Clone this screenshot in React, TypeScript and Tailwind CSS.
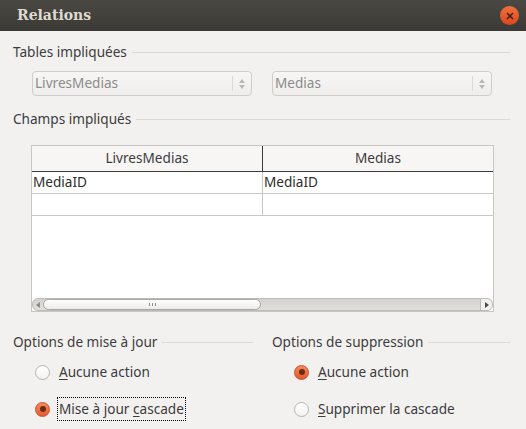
import React from "react";

function SectionTitle({ label }: { label: string }) {
  return (
    <div className="flex items-center h-[18px]">
      <span className="text-[13.6px] text-[#3c3c3c] whitespace-nowrap">{label}</span>
      <div className="flex-1 h-px bg-[#dcdad5] ml-[5px]" />
    </div>
  );
}

function Combo({ value }: { value: string }) {
  return (
    <div className="w-[220px] h-[25px] rounded-[4px] border border-[#d0cdc8] bg-gradient-to-b from-[#f7f6f5] to-[#efeeec] flex items-center">
      <span className="flex-1 pl-[2px] text-[13.6px] text-[#8b8b8b]">{value}</span>
      <div className="w-px h-[15px] bg-[#dcdad5]" />
      <div className="w-[18px] flex flex-col items-center justify-center gap-[2px]">
        <svg width="6" height="4" viewBox="0 0 6 4"><path d="M0 4 L3 0 L6 4 Z" fill="#b9b7b2" /></svg>
        <svg width="6" height="4" viewBox="0 0 6 4"><path d="M0 0 L3 4 L6 0 Z" fill="#b9b7b2" /></svg>
      </div>
    </div>
  );
}

function Radio({ checked, label, u, rest, focused }: { checked: boolean; label?: string; u: string; rest: string; focused?: boolean }) {
  return (
    <div className="flex items-center h-[22px]">
      {checked ? (
        <div className="w-[15px] h-[15px] rounded-full bg-gradient-to-b from-[#f28a5e] to-[#e5582a] border border-[#c9512a] flex items-center justify-center">
          <div className="w-[6px] h-[6px] rounded-full bg-[#6b2c17]" />
        </div>
      ) : (
        <div className="w-[15px] h-[15px] rounded-full bg-gradient-to-b from-white to-[#f4f3f2] border border-[#b5b3ae]" />
      )}
      <div className={"ml-[8px] px-[1px] h-[22px] leading-[22px] text-[13.6px] text-[#3c3c3c] whitespace-pre " + (focused ? "outline outline-1 outline-dotted outline-black" : "")}>
        <span>{label}</span>
        <span className="underline underline-offset-2">{u}</span>
        <span>{rest}</span>
      </div>
    </div>
  );
}

export default function App() {
  return (
    <div className="w-[526px] h-[429px] bg-[#f2f1f0] overflow-hidden" style={{ fontFamily: '"Noto Sans", "Open Sans", sans-serif' }}>
      {/* title bar */}
      <div className="h-[31px] bg-gradient-to-b from-[#4b4943] to-[#3a3935] flex items-center justify-between pl-[17px] pr-[7px]">
        <span className="text-[14px] font-bold text-[#dfdbd2]" style={{ fontFamily: '"DejaVu Serif", serif' }}>Relations</span>
        <div className="w-[19px] h-[19px] rounded-full bg-gradient-to-b from-[#f0703f] to-[#d9471b] flex items-center justify-center">
          <svg width="8" height="8" viewBox="0 0 8 8"><path d="M1 1 L7 7 M7 1 L1 7" stroke="#3a1a10" strokeWidth="1.4" /></svg>
        </div>
      </div>

      <div className="pl-[13px] pr-[16px]">
        <div className="mt-[12px]">
          <SectionTitle label="Tables impliquées" />
        </div>
        <div className="mt-[10px] pl-[19px] flex gap-[20px]">
          <Combo value="LivresMedias" />
          <Combo value="Medias" />
        </div>

        <div className="mt-[14px]">
          <SectionTitle label="Champs impliqués" />
        </div>

        {/* table */}
        <div className="mt-[17px] ml-[18px] w-[463px] h-[167px] bg-white border border-[#c9c7c3] flex flex-col">
          <div className="flex h-[26px] border-b border-[#3c3c3c] bg-[#f7f6f5]">
            <div className="w-[231px] border-r border-[#3c3c3c] flex items-center justify-center text-[13.6px] text-[#3c3c3c]">LivresMedias</div>
            <div className="flex-1 flex items-center justify-center text-[13.6px] text-[#3c3c3c]">Medias</div>
          </div>
          <div className="flex h-[22px] border-b border-[#c6c6c6]">
            <div className="w-[231px] border-r border-[#c6c6c6] flex items-center pl-[1px] text-[13.6px] text-[#2e2e2e]">MediaID</div>
            <div className="flex-1 flex items-center pl-[1px] text-[13.6px] text-[#2e2e2e]">MediaID</div>
          </div>
          <div className="flex h-[22px] border-b border-[#c6c6c6]">
            <div className="w-[231px] border-r border-[#c6c6c6]" />
            <div className="flex-1" />
          </div>
          <div className="flex-1" />
          {/* scrollbar */}
          <div className="h-[13px] flex items-center rounded-[6px] bg-gradient-to-b from-[#d4d2ce] to-[#e2e0dc] border border-[#bdbbb7]">
            <div className="w-[10px] flex items-center justify-center">
              <svg width="4" height="6" viewBox="0 0 4 6"><path d="M4 0 L0 3 L4 6 Z" fill="#8e8c88" /></svg>
            </div>
            <div className="w-[218px] h-[11px] rounded-[6px] bg-gradient-to-b from-white to-[#ecebe9] border border-[#a9a7a3] flex items-center justify-center gap-[2px]">
              <div className="w-px h-[3px] bg-[#8e8c88]" />
              <div className="w-px h-[3px] bg-[#8e8c88]" />
              <div className="w-px h-[3px] bg-[#8e8c88]" />
            </div>
            <div className="flex-1" />
            <div className="w-[12px] h-[11px] flex items-center justify-center border-l border-[#bdbbb7] rounded-r-[6px] bg-[#f2f1f0]">
              <svg width="4" height="6" viewBox="0 0 4 6"><path d="M0 0 L4 3 L0 6 Z" fill="#4a4a4a" /></svg>
            </div>
          </div>
        </div>

        {/* options */}
        <div className="mt-[21px] flex gap-[19px]">
          <div className="w-[240px]">
            <SectionTitle label="Options de mise à jour" />
            <div className="mt-[10px] pl-[22px] flex flex-col gap-[15px]">
              <Radio checked={false} u="A" rest="ucune action" />
              <Radio checked={true} label="Mise à jour " u="c" rest="ascade" focused />
            </div>
          </div>
          <div className="flex-1">
            <SectionTitle label="Options de suppression" />
            <div className="mt-[10px] pl-[22px] flex flex-col gap-[15px]">
              <Radio checked={true} u="A" rest="ucune action" />
              <Radio checked={false} u="S" rest="upprimer la cascade" />
            </div>
          </div>
        </div>
      </div>
    </div>
  );
}
